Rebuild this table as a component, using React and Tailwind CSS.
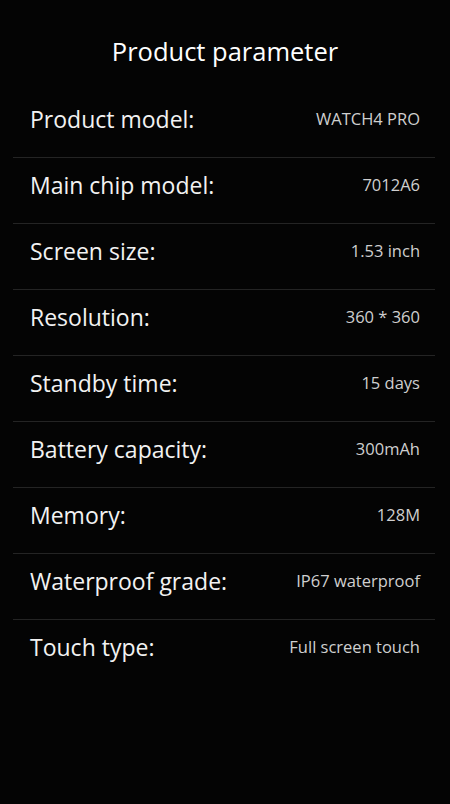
import React from 'react';

const params = [
  ['Product model:', 'WATCH4 PRO'],
  ['Main chip model:', '7012A6'],
  ['Screen size:', '1.53 inch'],
  ['Resolution:', '360 * 360'],
  ['Standby time:', '15 days'],
  ['Battery capacity:', '300mAh'],
  ['Memory:', '128M'],
  ['Waterproof grade:', 'IP67 waterproof'],
  ['Touch type:', 'Full screen touch'],
];

const App = () => {
  return (
    <div
      className="w-[450px] h-[804px] bg-[#040404] overflow-hidden"
      style={{ fontFamily: '"Open Sans", "Noto Sans", sans-serif' }}
    >
      {/* Title */}
      <div className="pt-[32px] h-[92px] text-center text-white text-[25.5px] leading-[38px]">
        Product parameter
      </div>

      {/* Parameter list */}
      <div className="ml-[13px] mr-[15px]">
        {params.map(([label, value], i) => (
          <div
            key={label}
            className={`h-[66px] flex justify-between items-start pt-[11px] pl-[17px] pr-[15px] ${
              i < params.length - 1 ? 'border-b border-[#242424]' : ''
            }`}
          >
            <span className="text-[#f2f2f2] text-[23px] leading-[32px]">{label}</span>
            <span className="text-[#cfcfcf] text-[16.5px] leading-[32px]">{value}</span>
          </div>
        ))}
      </div>
    </div>
  );
};

export default App;
